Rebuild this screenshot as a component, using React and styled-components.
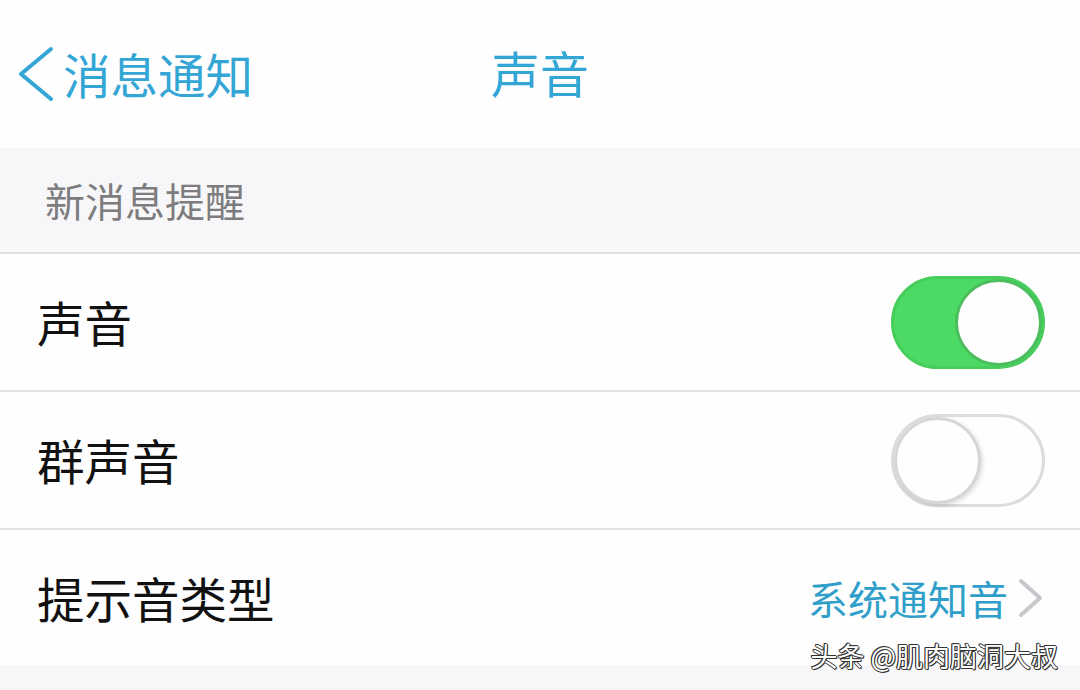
import styled, { createGlobalStyle } from "styled-components";

const GlobalStyle = createGlobalStyle`
  html, body {
    margin: 0;
    padding: 0;
    background: #f7f7f9;
  }
  body {
    font-family: "Noto Sans CJK SC", "Noto Sans", sans-serif;
  }
`

const Page = styled.div`
  position: relative;
  width: 1080px;
  height: 690px;
  overflow: hidden;
  background: #f7f7f9;
`

const NavBar = styled.div`
  position: relative;
  height: 148px;
  background: #fefefe;
  display: flex;
  align-items: center;
  justify-content: center;
`

const BackButton = styled.div`
  position: absolute;
  left: 17px;
  top: 45px;
  display: flex;
  align-items: center;
  gap: 8px;
  color: #34a6d6;
  font-size: 47.5px;
  line-height: 58px;
`

const Title = styled.div`
  color: #34a6d6;
  font-size: 49px;
  line-height: 58px;
  margin-top: -4px;
`

const SectionHeader = styled.div`
  padding-left: 45px;
  display: flex;
  align-items: center;
  color: #7d7d7f;
  font-size: 40px;
  border-bottom: 2px solid #e0e0e2;
  box-sizing: border-box;
  height: 106px;
`

const Row = styled.div`
  box-sizing: border-box;
  background: #fefefe;
  padding: 0 36px 0 37px;
  display: flex;
  align-items: center;
  justify-content: space-between;
  border-bottom: ${p => (p.last ? "none" : "2px solid #e2e2e4")};
  height: ${p => (p.last ? "135px" : "138px")};
`

const Label = styled.div`
  font-size: 47.5px;
  color: #111;
  line-height: 58px;
`

const Toggle = styled.div`
  width: 154px;
  height: 93px;
  box-sizing: border-box;
  border-radius: 47px;
  border: 3px solid ${p => (p.on ? "#46cd5c" : "#dcdcdc")};
  background: ${p => (p.on ? "#4cd964" : "#fefefe")};
  position: relative;
  margin-right: -1px;
`

const Knob = styled.div`
  position: absolute;
  top: 0;
  ${p => (p.on ? "right: 0;" : "left: 0;")}
  width: 87px;
  height: 87px;
  border-radius: 50%;
  background: #fefefe;
  box-sizing: border-box;
  border: ${p => (p.on ? "3px solid #4bbd5e" : "3px solid #d6d6d6")};
  box-shadow: ${p => (p.on ? "none" : "2px 2px 4px rgba(0,0,0,0.12)")};
`

const Value = styled.div`
  display: flex;
  align-items: center;
  gap: 10px;
  color: #2f9fc9;
  font-size: 40px;
  line-height: 52px;
`

const Watermark = styled.div`
  position: absolute;
  right: 22px;
  bottom: 18px;
  font-size: 27px;
  line-height: 32px;
  color: #fff;
  text-shadow: -1px 0 #333, 1px 0 #333, 0 -1px #333, 0 1px #333, 1px 1px #333, -1px -1px #333;
`

const Chevron = ({ color, w, h, stroke }) => (
  <svg width={w} height={h} viewBox={`0 0 ${w} ${h}`}>
    <polyline
      points={`${w - stroke},${stroke} ${stroke},${h / 2} ${w - stroke},${h - stroke}`}
      fill="none"
      stroke={color}
      strokeWidth={stroke}
      strokeLinecap="round"
      strokeLinejoin="round"
    />
  </svg>
)

const ChevronRight = () => (
  <svg width="26" height="40" viewBox="0 0 26 40">
    <polyline points="3,3 22,20 3,37" fill="none" stroke="#c7c7cc" strokeWidth="4" strokeLinecap="round" strokeLinejoin="round" />
  </svg>
)

export default function App() {
  return (
    <>
      <GlobalStyle />
      <Page>
        <NavBar>
          <BackButton>
            <Chevron color="#34a6d6" w={38} h={58} stroke={4} />
            <span>消息通知</span>
          </BackButton>
          <Title>声音</Title>
        </NavBar>
        <SectionHeader>新消息提醒</SectionHeader>
        <Row>
          <Label>声音</Label>
          <Toggle on>
            <Knob on />
          </Toggle>
        </Row>
        <Row>
          <Label>群声音</Label>
          <Toggle>
            <Knob />
          </Toggle>
        </Row>
        <Row last>
          <Label>提示音类型</Label>
          <Value>
            <span>系统通知音</span>
            <ChevronRight />
          </Value>
        </Row>
        <Watermark>头条 @肌肉脑洞大叔</Watermark>
      </Page>
    </>
  );
}
